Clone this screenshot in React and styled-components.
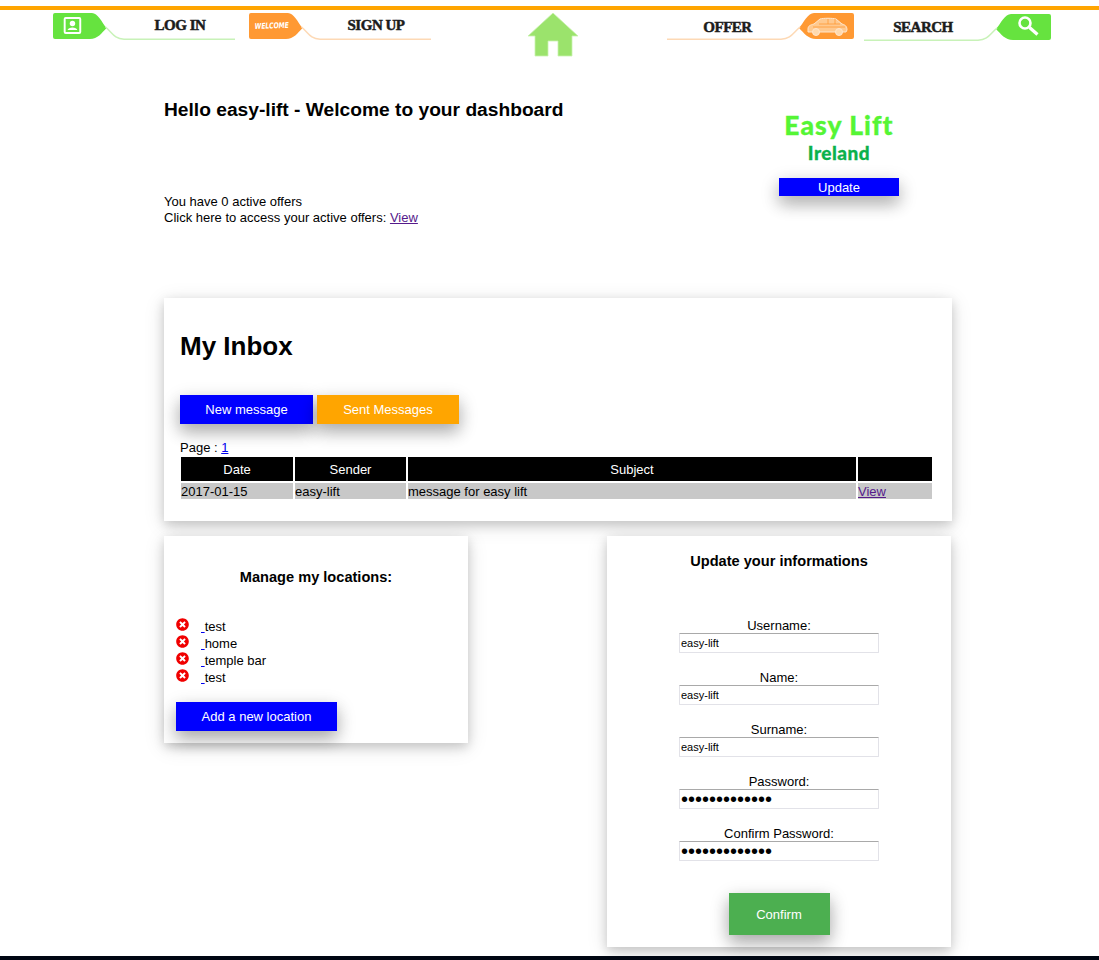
import React from "react";
import styled, { createGlobalStyle } from "styled-components";
import { FaTimesCircle } from "react-icons/fa";

const GlobalStyle = createGlobalStyle`
  html, body {
    margin: 0;
    padding: 0;
    background: #fff;
    color: #000;
    font-family: "Liberation Sans", Arial, sans-serif;
    font-size: 13px;
  }
`;

const Page = styled.div`
  width: 1099px;
  height: 960px;
  overflow: hidden;
  display: flex;
  flex-direction: column;
  box-sizing: border-box;
  padding-top: 6px;
`;

const TopBar = styled.header`
  border-top: 4px solid #ffa500;
  height: 56px;
  padding: 3px 48px 0 53px;
  display: flex;
  align-items: flex-start;
  flex-shrink: 0;
`;

const TabGroup = styled.nav`
  display: flex;
  gap: ${({ $gap }) => $gap}px;
`;

const Tab = styled.a`
  display: grid;
  width: ${({ $width }) => $width}px;
  height: 28px;
  margin-top: ${({ $drop }) => $drop || 0}px;
  > * {
    grid-area: 1 / 1;
  }
`;

const TabLabel = styled.span`
  font-family: "Liberation Serif", "Times New Roman", serif;
  font-weight: 700;
  font-size: 15px;
  letter-spacing: -0.5px;
  color: #1c1c1c;
  -webkit-text-stroke: 0.5px #1c1c1c;
  text-align: center;
  line-height: 24px;
  padding: ${({ $pad }) => $pad};
`;

const HomeLink = styled.a`
  display: block;
  width: 50px;
  height: 44px;
  margin: 0 89px 0 97px;
`;

const Main = styled.main`
  width: 788px;
  margin-left: 164px;
  flex: 1;
`;

const Welcome = styled.section`
  display: flex;
  justify-content: space-between;
  height: 229px;
`;

const Greeting = styled.div`
  padding-top: 30px;
`;

const Title = styled.h2`
  margin: 0 0 73px;
  font-size: 19.2px;
  line-height: 22px;
`;

const OfferText = styled.p`
  margin: 0;
  line-height: 16px;
`;

const TextLink = styled.a`
  color: ${({ $visited }) => ($visited ? "#551a8b" : "#0000ee")};
  text-decoration: underline;
`;

const LogoBox = styled.div`
  width: 120px;
  margin: 41px 53px 0 0;
  display: flex;
  flex-direction: column;
  align-items: center;
`;

const LogoMain = styled.div`
  font-family: Lato, "Liberation Sans", sans-serif;
  font-weight: 900;
  font-size: 26.5px;
  line-height: 30px;
  letter-spacing: 1px;
  color: #55f535;
  -webkit-text-stroke: 0.3px #55f535;
  white-space: nowrap;
`;

const LogoSub = styled.div`
  font-family: Lato, "Liberation Sans", sans-serif;
  font-weight: 900;
  font-size: 19px;
  line-height: 22px;
  letter-spacing: 0.5px;
  color: #0bb14c;
  -webkit-text-stroke: 0.3px #0bb14c;
  margin: 2px 0 14px;
`;

const Button = styled.button`
  border: 0;
  border-radius: 0;
  margin: 0;
  padding: 0;
  font-family: inherit;
  font-size: 13px;
  color: #fff;
  background: ${({ $color }) => $color || "#0000ff"};
  width: ${({ $width }) => $width}px;
  height: ${({ $height }) => $height || 29}px;
  box-shadow: 0 8px 16px rgba(0, 0, 0, 0.2), 0 6px 20px rgba(0, 0, 0, 0.19);
`;

const Card = styled.section`
  background: #fff;
  box-sizing: border-box;
  box-shadow: 0 4px 10px rgba(0, 0, 0, 0.16), 0 4px 20px rgba(0, 0, 0, 0.12);
`;

const InboxCard = styled(Card)`
  height: 223px;
  padding: 32px 16px 0;
`;

const InboxTitle = styled.h1`
  margin: 0 0 33px;
  font-size: 26px;
  line-height: 32px;
`;

const ButtonRow = styled.div`
  display: flex;
  gap: 4px;
  margin-bottom: 16px;
`;

const Pager = styled.div`
  line-height: 16px;
`;

const MessageTable = styled.table`
  width: 755px;
  border-collapse: separate;
  border-spacing: 2px;
  table-layout: fixed;
  margin: -1px 0 0 -1px;
`;

const HeadCell = styled.th`
  background: #000;
  color: #fff;
  font-weight: 400;
  height: 24px;
  padding: 0;
  width: ${({ $width }) => ($width ? `${$width}px` : "auto")};
`;

const BodyCell = styled.td`
  background: #c8c8c8;
  box-sizing: border-box;
  height: 16px;
  line-height: 15px;
  padding: 1px 0 0;
`;

const BottomRow = styled.div`
  display: grid;
  grid-template-columns: 304px 344px;
  column-gap: 139px;
  align-items: start;
  margin-top: 15px;
`;

const LocationsCard = styled(Card)`
  height: 207px;
  padding: 33px 12px 0;
`;

const CardHeading = styled.h3`
  margin: 0;
  font-size: 14.6px;
  line-height: 17px;
  text-align: center;
`;

const LocationsHeading = styled(CardHeading)`
  margin-bottom: 33px;
`;

const LocationList = styled.ul`
  list-style: none;
  margin: 0 0 15px;
  padding: 0;
`;

const LocationRow = styled.li`
  display: flex;
  align-items: flex-start;
  height: 17px;
  line-height: 15px;
`;

const RemoveIcon = styled(FaTimesCircle)`
  width: 13px;
  height: 13px;
  color: #f00000;
  margin: -1px 12px 0 0;
  flex-shrink: 0;
`;

const FormCard = styled(Card)`
  height: 411px;
  padding: 16px 0 0;
  display: flex;
  flex-direction: column;
  align-items: center;
`;

const FormHeading = styled(CardHeading)`
  line-height: 18px;
  margin-bottom: 47px;
`;

const Field = styled.label`
  display: flex;
  flex-direction: column;
  align-items: center;
  flex-shrink: 0;
  box-sizing: border-box;
  width: 200px;
  height: 52px;
  padding-top: 2px;
  line-height: 14px;
`;

const Input = styled.input`
  box-sizing: border-box;
  width: 200px;
  height: 20px;
  margin: 0;
  padding: 0 1px;
  font-family: "Liberation Sans", Arial, sans-serif;
  font-size: ${({ type }) => (type === "password" ? "20px" : "11px")};
  color: #000;
  background: #fff;
  border: 1px solid #e2e2e8;
  border-top-color: #a9a9a9;
  border-radius: 1px;
`;

const ConfirmRow = styled.div`
  margin-top: 16px;
`;

const Footer = styled.footer`
  height: 4px;
  background: #000612;
  flex-shrink: 0;
`;

function Flag({ color, line, mirror, children }) {
  return (
    <svg viewBox="0 0 187 28" width="100%" height="28" preserveAspectRatio="none" fill="none">
      <g transform={mirror ? "translate(187 0) scale(-1 1)" : undefined}>
        <path
          d="M2 0H40C46 0 50 9 55 15C50 20 46 26 38 26H2A2 2 0 0 1 0 24V2A2 2 0 0 1 2 0Z"
          fill={color}
        />
        <path d="M54 14C61 20 63 26 73 26.3H187" stroke={line} strokeWidth="1.5" />
      </g>
      {children}
    </svg>
  );
}

const ProfileIcon = () => (
  <g fill="none">
    <rect x="12" y="5" width="16" height="15" rx="1" stroke="#fff" strokeWidth="2" />
    <circle cx="20" cy="10.5" r="2.8" fill="#fff" />
    <path d="M15 17C15.5 13.5 24.5 13.5 25 17Z" fill="#fff" />
  </g>
);

const WelcomeIcon = () => (
  <text
    x="6"
    y="16"
    fill="#fff"
    fontFamily="'DejaVu Sans', sans-serif"
    fontStyle="italic"
    fontWeight="700"
    fontSize="8"
    textLength="35"
    lengthAdjust="spacingAndGlyphs"
    transform="rotate(-2 6 16)"
  >
    WELCOME
  </text>
);

const CarIcon = () => (
  <g stroke="#ffe6cc" strokeWidth="1">
    <path
      d="M141 16C141 13 143 12 147 11L153 6C156 5 166 5 169 6L175 11C179 12 180 14 180 17L179 19H141Z"
      fill="#ffc98f"
    />
    <path d="M152 11H173M161 6V11M168 6V11M146 14H178" strokeWidth="0.8" stroke="#ff9933" fill="none" />
    <circle cx="149" cy="19" r="3.5" fill="#ffd9ad" />
    <circle cx="172" cy="19" r="3.5" fill="#ffd9ad" />
  </g>
);

const SearchIcon = () => (
  <g stroke="#fff" fill="none">
    <circle cx="161" cy="9" r="5.5" strokeWidth="2.6" />
    <path d="M165.5 13.5L173.5 20.5" strokeWidth="3.2" />
  </g>
);

const locations = ["test", "home", "temple bar", "test"];

const fields = [
  { label: "Username:", value: "easy-lift" },
  { label: "Name:", value: "easy-lift" },
  { label: "Surname:", value: "easy-lift" },
  { label: "Password:", value: "aaaaaaaaaaaaa", type: "password" },
  { label: "Confirm Password:", value: "aaaaaaaaaaaaa", type: "password" },
];

export default function App() {
  return (
    <Page>
      <GlobalStyle />
      <TopBar>
        <TabGroup $gap={14}>
          <Tab $width={182}>
            <Flag color="#66e33f" line="#c8f2b8"><ProfileIcon /></Flag>
            <TabLabel $pad="0 0 0 72px">LOG IN</TabLabel>
          </Tab>
          <Tab $width={182}>
            <Flag color="#ff9933" line="#fdd9b5"><WelcomeIcon /></Flag>
            <TabLabel $pad="0 0 0 72px">SIGN UP</TabLabel>
          </Tab>
        </TabGroup>
        <HomeLink>
          <svg viewBox="0 0 50 44" width="50" height="44">
            <path
              d="M25 0L50 23H44V43H30V28H20V43H7V23H0Z"
              fill="#9be36c"
              stroke="#c9f2ae"
              strokeWidth="0.8"
            />
          </svg>
        </HomeLink>
        <TabGroup $gap={10}>
          <Tab $width={187}>
            <Flag color="#ff9933" line="#fdd9b5" mirror><CarIcon /></Flag>
            <TabLabel $pad="2px 66px 0 0">OFFER</TabLabel>
          </Tab>
          <Tab $width={187} $drop={1}>
            <Flag color="#66e33f" line="#c8f2b8" mirror><SearchIcon /></Flag>
            <TabLabel $pad="1px 69px 0 0">SEARCH</TabLabel>
          </Tab>
        </TabGroup>
      </TopBar>

      <Main>
        <Welcome>
          <Greeting>
            <Title>Hello easy-lift - Welcome to your dashboard</Title>
            <OfferText>You have 0 active offers</OfferText>
            <OfferText>
              Click here to access your active offers: <TextLink $visited>View</TextLink>
            </OfferText>
          </Greeting>
          <LogoBox>
            <LogoMain>Easy Lift</LogoMain>
            <LogoSub>Ireland</LogoSub>
            <Button $width={120} $height={18}>Update</Button>
          </LogoBox>
        </Welcome>

        <InboxCard>
          <InboxTitle>My Inbox</InboxTitle>
          <ButtonRow>
            <Button $width={133}>New message</Button>
            <Button $width={142} $color="#ffa500">Sent Messages</Button>
          </ButtonRow>
          <Pager>Page : <TextLink>1</TextLink></Pager>
          <MessageTable>
            <thead>
              <tr>
                <HeadCell $width={112}>Date</HeadCell>
                <HeadCell $width={111}>Sender</HeadCell>
                <HeadCell>Subject</HeadCell>
                <HeadCell $width={74} />
              </tr>
            </thead>
            <tbody>
              <tr>
                <BodyCell>2017-01-15</BodyCell>
                <BodyCell>easy-lift</BodyCell>
                <BodyCell>message for easy lift</BodyCell>
                <BodyCell><TextLink $visited>View</TextLink></BodyCell>
              </tr>
            </tbody>
          </MessageTable>
        </InboxCard>

        <BottomRow>
          <LocationsCard>
            <LocationsHeading>Manage my locations:</LocationsHeading>
            <LocationList>
              {locations.map((name, i) => (
                <LocationRow key={i}>
                  <RemoveIcon />
                  <span><TextLink>&nbsp;</TextLink>{name}</span>
                </LocationRow>
              ))}
            </LocationList>
            <Button $width={161}>Add a new location</Button>
          </LocationsCard>

          <FormCard>
            <FormHeading>Update your informations</FormHeading>
            {fields.map((f) => (
              <Field key={f.label}>
                {f.label}
                <Input type={f.type || "text"} defaultValue={f.value} />
              </Field>
            ))}
            <ConfirmRow>
              <Button $width={101} $height={42} $color="#4caf50">Confirm</Button>
            </ConfirmRow>
          </FormCard>
        </BottomRow>
      </Main>
      <Footer />
    </Page>
  );
}
